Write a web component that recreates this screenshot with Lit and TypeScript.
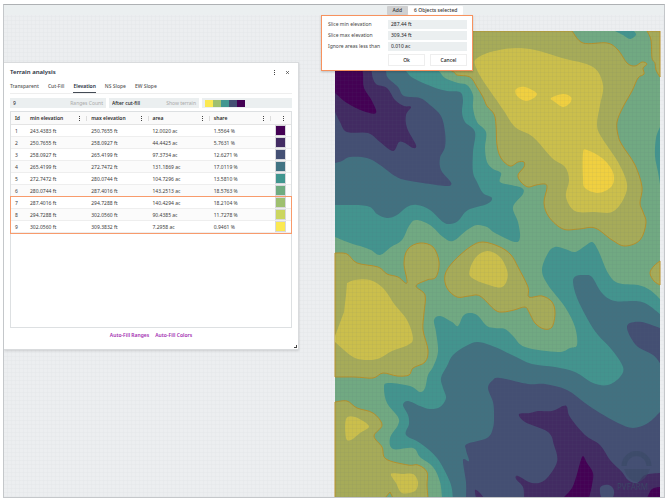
import { LitElement, html, svg, css } from "lit";
import { customElement, property } from "lit/decorators.js";

type Range = [id: number, min: string, max: string, area: string, share: string, color: string];

const RANGES: Range[] = [
  [1, "243.4383 ft", "250.7655 ft", "12.0020 ac", "1.5564 %", "#440154"],
  [2, "250.7655 ft", "258.0927 ft", "44.4425 ac", "5.7631 %", "#432c63"],
  [3, "258.0927 ft", "265.4199 ft", "97.3734 ac", "12.6271 %", "#445074"],
  [4, "265.4199 ft", "272.7472 ft", "131.1869 ac", "17.0119 %", "#417383"],
  [5, "272.7472 ft", "280.0744 ft", "104.7296 ac", "13.5810 %", "#419690"],
  [6, "280.0744 ft", "287.4016 ft", "143.2513 ac", "18.5763 %", "#6fab80"],
  [7, "287.4016 ft", "294.7288 ft", "140.4294 ac", "18.2104 %", "#9fc070"],
  [8, "294.7288 ft", "302.0560 ft", "90.4385 ac", "11.7278 %", "#cbd660"],
  [9, "302.0560 ft", "309.3832 ft", "7.2958 ac", "0.9461 %", "#fbe952"],
];

const RAMP = ["#fbe952", "#9fc070", "#419690", "#445074", "#440154"];

interface Contour {
  level: string;
  /** Points of the smooth outline, "x,y x,y ..." */
  pts: string;
  /** Straight corners appended after the outline */
  via?: string;
  closed?: boolean;
}

const CONTOURS: Contour[] = [
  // north-west basin
  { level: "l5", pts: "425,60 438,70 445,78 458,83 467,85 473,95 473,108 477,122 486,132 485,148 487,162 493,169 501,173 500,182 511,185 522,188 523,194 513,207 518,222 520,237 515,242 495,233 487,227 477,225 467,230 453,241 443,237 430,225 416,220 409,226 402,240 391,247 380,255 371,250 363,247 350,243 335,237", via: "335,60" },
  { level: "l4", pts: "395,60 405,70 413,78 433,87 447,91 460,92 463,100 462,112 465,122 475,132 473,152 473,172 477,182 483,193 492,198 487,204 468,210 458,221 450,224 443,222 430,210 417,205 407,207 397,215 387,218 377,214 367,206 335,205", via: "335,60" },
  { level: "l3", pts: "384,60 386,71 388,78 398,87 404,96 420,98 430,105 441,116 445,132 445,147 440,158 441,170 450,181 451,185 445,186 423,183 405,180 395,176 380,165 367,158 350,157 342,161 335,163", via: "335,60" },
  { level: "l2", pts: "372,60 372,74 376,84 387,88 395,100 404,106 411,107 406,115 407,128 416,145 413,148 405,143 399,142 393,151 380,142 368,133 347,132 340,122 335,112", via: "335,60" },
  { level: "l1", pts: "362,60 363,75 364,88 372,101 376,113 363,111 347,103 335,93", via: "335,60" },
  // northern and eastern edge pockets
  { level: "l5", pts: "615,31 623,35 630,39 636,35 634,31" },
  { level: "l5", pts: "660,127 656,138 655,156 658,172 660,184" },
  // south-east basin
  { level: "l5", pts: "660,299 650,290 638,285 618,283 608,273 598,250 592,242 585,246 575,252 565,249 555,247 548,253 542,270 548,285 565,307 575,327 577,345 570,348 558,352 525,347 513,336 505,329 495,328 487,326 477,315 469,313 463,316 458,326 452,322 440,316 434,320 436,332 438,352 433,367 428,375 425,388 420,392 410,386 388,383 384,388 387,403 398,417 398,425 390,438 393,449 413,448 420,457 433,467 440,482 442,498", via: "660,498" },
  { level: "l4", pts: "660,314 642,302 615,301 602,293 592,277 585,275 576,276 573,282 577,298 588,320 598,335 612,350 623,367 620,377 608,385 593,383 575,372 555,367 532,364 512,355 495,347 478,342 466,346 453,355 447,366 441,378 443,388 446,398 440,407 430,409 420,406 408,401 403,405 408,415 409,424 406,435 420,443 437,458 450,482 453,498", via: "660,498" },
  { level: "l3", pts: "660,328 642,322 630,323 627,328 631,338 638,347 653,355 660,363" },
  { level: "l3", pts: "660,412 648,423 633,428 618,423 600,413 585,403 567,390 545,384 528,384 500,378 493,380 488,388 493,402 494,415 493,428 487,438 467,444 466,450 469,461 463,460 466,482 466,498", via: "660,498" },
  { level: "l2", pts: "524,498 523,487 516,479 518,476 532,483 545,480 557,462 554,445 548,432 525,422 519,414 530,413 538,411 552,411 563,406 567,407 570,417 585,435 600,445 610,460 622,472 628,480 637,483 645,475 660,473", via: "660,498" },
  { level: "l3", pts: "600,488 605,485 611,486 614,491 612,498 602,498", closed: true },
  { level: "l1", pts: "563,498 572,488 577,474 580,463 583,456 587,463 593,473 592,485 589,498" },
  { level: "l1", pts: "647,498 652,489 660,487", via: "660,498" },
  { level: "l2", pts: "476,498 475,490 479,492 484,498" },
  // outlined plateaus
  { level: "l7", pts: "425,60 452,71 457,75 470,77 477,87 483,97 487,106 494,114 496,125 497,145 501,158 510,166 518,162 524,162 524,167 518,175 521,182 528,187 536,185 545,184 547,188 544,203 549,217 563,229 579,229 595,228 612,240 625,246 640,240 646,223 643,212 640,203 642,187 635,165 622,145 618,135 617,122 623,107 632,91 638,78 644,74 643,68 647,64 642,62 635,66 627,63 618,50 607,43 583,43 572,31", via: "425,31" },
  { level: "l7", pts: "647,31 651,40 652,58 655,63 656,70 660,77", via: "660,31" },
  { level: "l7", pts: "660,261 654,266 650,273 654,281 660,285" },
  { level: "l7", pts: "483,242 500,247 511,255 518,267 528,287 529,297 542,296 552,302 555,313 552,327 544,329 535,323 529,312 525,307 514,310 503,312 495,310 480,296 469,296 457,297 447,288 445,275 453,262 470,247", closed: true },
  { level: "l7", pts: "335,253 347,254 357,263 378,267 387,274 398,277 407,283 404,263 408,249 420,243 433,247 439,262 436,277 427,280 416,286 425,295 424,313 423,330 428,350 425,362 413,368 409,375 397,376 383,373 373,378 355,377 335,377" },
  { level: "l7", pts: "335,402 347,401 357,408 373,413 382,425 374,436 382,447 386,459 408,465 418,465 427,472 427,485 428,498", via: "393,498 390,492 385,498 335,498" },
  { level: "l8", pts: "495,51 485,54 476,59 475,65 482,79 495,98 504,111 515,127 533,137 552,158 565,167 569,180 566,197 575,211 594,212 612,212 623,200 627,184 618,162 602,138 597,125 600,105 603,85 593,67 562,58 535,50 515,48", closed: true },
  { level: "l8", pts: "488,251 500,257 507,270 507,280 502,287 492,286 472,278 470,269 477,256", closed: true },
  { level: "l8", pts: "347,283 355,280 370,280 383,288 395,305 407,320 413,338 408,345 392,351 380,358 368,360 353,357 335,342", via: "335,336 344,312 346,295" },
  { level: "l8", pts: "346,419 355,417 369,426 360,433 351,440 346,438", closed: true },
  { level: "l8", pts: "391,474 402,474 413,474 418,482 415,491 402,493 396,483", closed: true },
  { level: "l9", pts: "516,89 525,87 537,94 527,101 517,96", closed: true },
  { level: "l9", pts: "551,98 563,94 571,97 570,103 563,107 555,102", closed: true },
  { level: "l9", pts: "583,153 587,150 602,158 612,170 614,180 610,188 598,193 585,188 583,178", closed: true },
];

function outline({ pts, via, closed }: Contour): string {
  const p = pts.split(" ").map((s) => s.split(",").map(Number));
  const n = p.length;
  const at = (i: number) => (closed ? p[(i + n) % n] : p[Math.max(0, Math.min(n - 1, i))]);
  let d = `M${p[0]}`;
  for (let i = 0; i < (closed ? n : n - 1); i++) {
    const [a, b, c, e] = [at(i - 1), at(i), at(i + 1), at(i + 2)];
    d += `C${b[0] + (c[0] - a[0]) / 6},${b[1] + (c[1] - a[1]) / 6} ${c[0] - (e[0] - b[0]) / 6},${c[1] - (e[1] - b[1]) / 6} ${c}`;
  }
  if (via) d += `L${via}`;
  return d + "Z";
}

@customElement("terrain-map")
export class TerrainMap extends LitElement {
  static styles = css`
    :host { display: block; }
    .map { display: block; width: 100%; height: 100%; }
    .base { fill: #71a982; }
    .l1 { fill: #440154; }
    .l2 { fill: #422b62; }
    .l3 { fill: #444f73; }
    .l4 { fill: #427180; }
    .l5 { fill: #43948e; }
    .l7 { fill: #a6ab59; stroke: #b7902a; stroke-width: 1; }
    .l8 { fill: #cbbf4c; }
    .l9 { fill: #f0d040; }
    .mesh { fill: none; stroke: #506070; stroke-opacity: 0.05; stroke-width: 1; }
    .ring { fill: none; stroke: #3a4a66; stroke-width: 5; opacity: 0.7; }
    .dome { fill: #3a4a66; opacity: 0.6; }
    .mark { fill: #3a4a66; font: 8px "Noto Sans", sans-serif; opacity: 0.8; }
  `;

  render() {
    return html`
      <svg class="map" viewBox="334 31 327 467" preserveAspectRatio="xMidYMin slice" role="img" aria-label="Elevation map">
        <defs>
          <pattern id="mesh" width="4" height="4" patternUnits="userSpaceOnUse">
            <path class="mesh" d="M0 .5H4M.5 0V4" />
          </pattern>
        </defs>
        <rect class="base" x="335" y="31" width="325" height="467" />
        ${CONTOURS.map((c) => svg`<path class=${c.level} d=${outline(c)} />`)}
        <path class="ring" d="M624 466A12.500 12.500 0 1 1 649 466" />
        <path class="dome" d="M624 469H650Q646 481 637 482Q628 481 624 469Z" />
        <text class="mark" x="617" y="490">PVFARM</text>
        <rect x="335" y="31" width="325" height="467" fill="url(#mesh)" />
      </svg>
    `;
  }
}

@customElement("slice-dialog")
export class SliceDialog extends LitElement {
  static styles = css`
    :host { display: block; box-sizing: border-box; background: #fff; border: 1px solid #f7925e; padding: 4px 5px 4px 6px; box-shadow: 0 1px 2px #0003; font: 5px/9px "Noto Sans", sans-serif; color: #444; }
    .form { display: grid; grid-template-columns: 60px 1fr; row-gap: 2px; margin: 0; }
    .field { box-sizing: border-box; min-width: 0; width: 100%; height: 9px; border: 0; padding: 0 3px; background: #ebeff0; font: inherit; color: #222; }
    .actions { grid-column: 2; display: grid; grid-template-columns: 1fr 1fr; gap: 5px; padding-top: 1px; }
    .btn { height: 12px; padding: 0; background: #fff; border: 1px solid #eee; font: inherit; font-weight: 500; color: #222; }
  `;

  render() {
    return html`
      <form class="form" @submit=${(e: Event) => e.preventDefault()}>
        <label for="min">Slice min elevation</label><input class="field" id="min" value="287.44 ft" />
        <label for="max">Slice max elevation</label><input class="field" id="max" value="309.34 ft" />
        <label for="area">Ignore areas less than</label><input class="field" id="area" value="0.010 ac" />
        <div class="actions">
          <button class="btn" type="submit">Ok</button>
          <button class="btn" type="button">Cancel</button>
        </div>
      </form>
    `;
  }
}

@customElement("terrain-panel")
export class TerrainPanel extends LitElement {
  @property() tab = "Elevation";

  static styles = css`
    :host { display: flex; flex-direction: column; box-sizing: border-box; background: #fff; padding: 4px 6px 10px; border: 1px solid #d9dbdd; border-left: 0; box-shadow: 0 1px 2px #0002; font: 5px/8px "Noto Sans", sans-serif; color: #3c3c3c; }
    button, input, select { font: inherit; color: inherit; border: 0; padding: 0; margin: 0; background: none; }
    .head { display: flex; align-items: center; gap: 8px; height: 10px; padding-right: 2px; }
    .title { flex: 1; margin: 0; font-size: 6px; font-weight: 600; color: #222b3a; }
    .icon { display: block; width: 5px; height: 5px; }
    .glyph { display: block; width: 5px; height: 5px; fill: #444; stroke: #444; }
    .tabs { display: flex; gap: 9px; height: 17px; border-bottom: 1px solid #eee; box-sizing: border-box; }
    .tab { align-self: flex-end; height: 11px; padding-bottom: 2px; font-weight: 500; color: #555; border-bottom: 1px solid transparent; }
    .tab.on { font-weight: 600; color: #222b3a; border-color: #444b55; }
    .filters { display: grid; grid-template-columns: 96fr 90fr 90fr; gap: 3px; margin: 4px 0 3px; }
    .filter { display: flex; align-items: center; justify-content: space-between; height: 10px; padding: 0 3px; background: #ebeff0; box-sizing: border-box; min-width: 0; color: #222; }
    .count { width: 30px; min-width: 0; }
    .pick { appearance: none; font-weight: 500; }
    .hint { color: #aaa; }
    .ramp { display: flex; }
    .stop { width: 8px; height: 7px; }
    .grid { flex: 1; border: 1px solid #dde0e2; }
    .table { width: 100%; table-layout: fixed; border-collapse: separate; border-spacing: 0; }
    .table th, .table td { padding: 0 0 0 4px; text-align: left; box-sizing: border-box; line-height: 8px; }
    .table th { height: 13px; background: #fafafa; color: #2c2c2c; font-weight: 600; border-bottom: 1px solid #e4e4e4; }
    .table td { height: 12px; border-bottom: 1px solid #eee; }
    .table tr:nth-child(even) td { background: #fbfbfb; }
    .cid { width: 15px; }
    .cs { width: 20px; }
    .cell { display: flex; justify-content: space-between; align-items: center; border-right: 1px solid #ddd; padding-right: 4px; height: 5px; }
    .cell.last { border: 0; padding-right: 5px; justify-content: flex-end; }
    .hot { position: relative; }
    .hot::after { content: ""; position: absolute; inset: -1px; border: 1px solid #f89b6c; pointer-events: none; }
    .swatch { display: block; box-sizing: border-box; width: 11px; height: 11px; border: 1px solid #d8d8dc; }
    .foot { display: flex; justify-content: center; gap: 6px; padding-top: 3px; }
    .link { color: #a22bb0; font-weight: 600; text-decoration: none; }
    .grip { position: absolute; right: 1px; bottom: 1px; width: 3px; height: 3px; border: solid #444; border-width: 0 1px 1px 0; box-sizing: border-box; }
  `;

  private dots = () => html`<svg class="glyph" viewBox="0 0 5 5" stroke="none"><path d="M2.500 0V1M2.500 2V3M2.500 4V5" /></svg>`;

  private row = ([id, min, max, area, share, color]: Range) => html`
    <tr>
      <td>${id}</td><td>${min}</td><td>${max}</td><td>${area}</td><td>${share}</td>
      <td><span class="swatch" style="background:${color}"></span></td>
    </tr>
  `;

  render() {
    return html`
      <header class="head">
        <h1 class="title">Terrain analysis</h1>
        <button class="icon" aria-label="Menu">${this.dots()}</button>
        <button class="icon" aria-label="Close"><svg class="glyph" viewBox="0 0 5 5"><path d="M1 1L4 4M4 1L1 4" stroke-width=".7" /></svg></button>
      </header>
      <nav class="tabs">
        ${["Transparent", "Cut-Fill", "Elevation", "NS Slope", "EW Slope"].map(
          (t) => html`<button class="tab ${t === this.tab ? "on" : ""}" @click=${() => (this.tab = t)}>${t}</button>`
        )}
      </nav>
      <div class="filters">
        <div class="filter"><input class="count" id="count" value="9" /><label class="hint" for="count">Ranges Count</label></div>
        <div class="filter"><select class="pick" id="terrain"><option>After cut-fill</option></select><label class="hint" for="terrain">Show terrain</label></div>
        <div class="filter"><div class="ramp">${RAMP.map((c) => html`<span class="stop" style="background:${c}"></span>`)}</div></div>
      </div>
      <div class="grid">
        <table class="table">
          <colgroup><col class="cid" /><col /><col /><col /><col /><col class="cs" /></colgroup>
          <thead>
            <tr>
              <th>Id</th>
              ${["min elevation", "max elevation", "area", "share"].map((h) => html`<th><div class="cell">${h}${this.dots()}</div></th>`)}
              <th><div class="cell last">${this.dots()}</div></th>
            </tr>
          </thead>
          <tbody>${RANGES.slice(0, 6).map(this.row)}</tbody>
          <tbody class="hot">${RANGES.slice(6).map(this.row)}</tbody>
        </table>
      </div>
      <footer class="foot"><a class="link" href="#ranges">Auto-Fill Ranges</a><a class="link" href="#colors">Auto-Fill Colors</a></footer>
      <span class="grip"></span>
    `;
  }
}

@customElement("app-root")
export class AppRoot extends LitElement {
  static styles = css`
    :host { display: block; box-sizing: border-box; height: 100vh; padding: 4px 5px 3px 3px; background: #fff; font: 5px/9px "Noto Sans", sans-serif; }
    .canvas { position: relative; box-sizing: border-box; height: 100%; overflow: hidden; border: 1px solid #c4c7ca; border-top-color: #aeb1b4; background: repeating-linear-gradient(#0000 0 3px, #dfe2e54d 3px 4px), repeating-linear-gradient(90deg, #0000 0 3px, #dfe2e54d 3px 4px), #eceef0; }
    .bar { display: flex; justify-content: center; height: 10px; padding: 1px 0 0 182px; box-sizing: border-box; background: #ebeff0; }
    .item { border: 0; height: 9px; padding: 0 6px; background: #fff; font: inherit; font-weight: 500; color: #333; border-radius: 1px; }
    .item.on { background: #cfd0d1; }
    .map { position: absolute; left: 50%; right: 3px; top: 26px; bottom: 0; }
    .dialog { position: absolute; left: 317px; top: 10px; width: 152px; }
    .panel { position: absolute; left: 0; top: 57px; width: 295px; height: 288px; }
  `;

  render() {
    return html`
      <main class="canvas">
        <div class="bar"><button class="item on">Add</button><button class="item">6 Objects selected</button></div>
        <terrain-map class="map"></terrain-map>
        <terrain-panel class="panel"></terrain-panel>
        <slice-dialog class="dialog"></slice-dialog>
      </main>
    `;
  }
}
